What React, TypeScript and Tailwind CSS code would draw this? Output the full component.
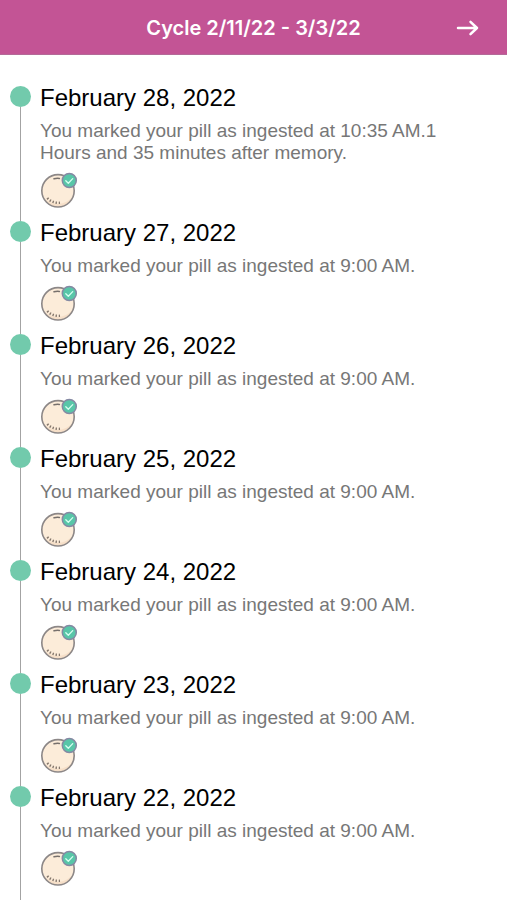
const entries = [
  { date: "February 28, 2022", text: "You marked your pill as ingested at 10:35 AM.1 Hours and 35 minutes after memory." },
  { date: "February 27, 2022", text: "You marked your pill as ingested at 9:00 AM." },
  { date: "February 26, 2022", text: "You marked your pill as ingested at 9:00 AM." },
  { date: "February 25, 2022", text: "You marked your pill as ingested at 9:00 AM." },
  { date: "February 24, 2022", text: "You marked your pill as ingested at 9:00 AM." },
  { date: "February 23, 2022", text: "You marked your pill as ingested at 9:00 AM." },
  { date: "February 22, 2022", text: "You marked your pill as ingested at 9:00 AM." },
];

function PillIcon() {
  return (
    <svg viewBox="0 0 38 38" className="mt-2 block h-[38px] w-[38px]" fill="none" aria-hidden="true">
      <circle cx="18" cy="18.800" r="16.200" fill="#fcecd9" />
      <path d="M4 26.300a16.200 16.200 0 0 0 29.500-3C28 32.500 14 35.500 4 26.300Z" fill="#f6dfc8" />
      <circle cx="18" cy="18.800" r="16.200" stroke="#8c8787" strokeWidth="1.600" />
      <path d="M14 6.800q2.700-.8 5.400-.4" stroke="#77706c" strokeWidth="1.500" strokeLinecap="round" />
      <path d="M7.300 26q5 5.300 12.700 4.800" stroke="#85776c" strokeWidth="2.400" strokeDasharray="1.400 1.800" />
      <circle cx="29.300" cy="8.500" r="7" fill="#58c6a8" stroke="#8589a3" strokeWidth="1.500" />
      <path d="m25.800 8.700 2.500 2.500 4.400-4.600" stroke="#d5fff0" strokeWidth="1.300" strokeLinecap="round" strokeLinejoin="round" />
    </svg>
  );
}

function Header() {
  return (
    <header className="grid h-[55px] grid-cols-[1fr_auto_1fr] items-center border-b border-[#b46a98] bg-[#c35495] px-7 pt-px text-white">
      <span />
      <h1 className="font-['Inter',sans-serif] text-xl leading-7 font-semibold">
        Cycle 2/11/22 - 3/3/22
      </h1>
      <button type="button" aria-label="Next cycle" className="justify-self-end">
        <svg viewBox="0 0 24 20" className="block h-5 w-6" fill="none" aria-hidden="true">
          <path
            d="M3 10h19M15.500 3.800 22 10l-6.500 6.200"
            stroke="currentColor"
            strokeWidth="2.500"
            strokeLinecap="round"
            strokeLinejoin="round"
          />
        </svg>
      </button>
    </header>
  );
}

export default function App() {
  return (
    <div className="flex min-h-screen flex-col bg-white font-['Liberation_Sans',Arial,sans-serif]">
      <Header />
      <main className="flex grow flex-col pt-[27px]">
        <ol className="flex grow flex-col">
          {entries.map((entry, i) => (
            <li key={entry.date} className="flex pr-10 pl-[10px] last:grow">
              <div className="mr-[9px] flex w-[21px] shrink-0 flex-col items-center">
                <div className={i === 0 ? "h-1 w-px" : "h-1 w-px bg-[#a3a3a3]"} />
                <div className="h-[21px] w-[21px] rounded-full bg-[#72caac]" />
                <div className="w-px grow bg-[#a3a3a3]" />
              </div>
              <div className="pb-[7px]">
                <h2 className="text-2xl leading-8 text-black">{entry.date}</h2>
                <p className="mt-1.5 text-[19px] leading-[22px] text-[#777777]">{entry.text}</p>
                <PillIcon />
              </div>
            </li>
          ))}
        </ol>
      </main>
    </div>
  );
}
